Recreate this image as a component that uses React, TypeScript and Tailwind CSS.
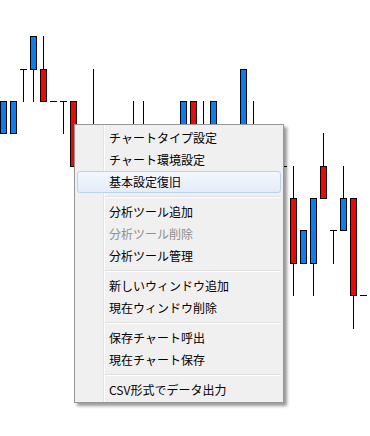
import React from 'react';

type Candle = {
  x: number;
  top?: number;
  bot?: number;
  fill?: string;
  hi?: number;
  lo?: number;
  tick?: number;
};

const BLUE = '#0080ff';
const RED = '#ff0000';

const candles: Candle[] = [
  { x: 0, top: 101, bot: 133, fill: BLUE },
  { x: 10, top: 101, bot: 133, fill: BLUE },
  { x: 20, tick: 69, hi: 69, lo: 101 },
  { x: 30, top: 36, bot: 69, fill: BLUE, hi: 36, lo: 101 },
  { x: 40, top: 69, bot: 101, fill: RED, hi: 36, lo: 101 },
  { x: 50, tick: 101 },
  { x: 60, tick: 101, hi: 101, lo: 133 },
  { x: 70, top: 101, bot: 166, fill: RED },
  { x: 90, hi: 69, lo: 230 },
  { x: 130, hi: 101, lo: 166 },
  { x: 140, hi: 101, lo: 198 },
  { x: 180, top: 101, bot: 166, fill: BLUE },
  { x: 190, top: 101, bot: 133, fill: RED },
  { x: 200, hi: 101, lo: 166 },
  { x: 210, top: 101, bot: 166, fill: BLUE },
  { x: 240, top: 69, bot: 166, fill: BLUE },
  { x: 250, hi: 101, lo: 198 },
  { x: 280, tick: 166, hi: 166, lo: 198 },
  { x: 290, top: 198, bot: 263, fill: RED, hi: 166, lo: 295 },
  { x: 300, top: 230, bot: 263, fill: BLUE },
  { x: 310, top: 198, bot: 263, fill: BLUE, lo: 295 },
  { x: 320, top: 166, bot: 198, fill: RED, hi: 133 },
  { x: 330, tick: 230, hi: 230, lo: 263 },
  { x: 340, top: 198, bot: 230, fill: BLUE, hi: 166 },
  { x: 350, top: 198, bot: 295, fill: RED, lo: 328 },
  { x: 360, tick: 295 },
];

const Chart = () => (
  <svg width="370" height="436" className="block" shapeRendering="crispEdges">
    {candles.map((c, i) => {
      const hi = c.hi ?? c.top;
      const lo = c.lo ?? c.bot;
      return (
        <g key={i}>
          {hi !== undefined && lo !== undefined && hi !== lo && (
            <line x1={c.x + 3.5} x2={c.x + 3.5} y1={hi} y2={lo + 1} stroke="#000" />
          )}
          {c.tick !== undefined && (
            <line x1={c.x} x2={c.x + 7} y1={c.tick + 0.5} y2={c.tick + 0.5} stroke="#000" />
          )}
          {c.top !== undefined && c.bot !== undefined && (
            <rect
              x={c.x + 0.5}
              y={c.top + 0.5}
              width={6}
              height={c.bot - c.top}
              fill={c.fill}
              stroke="#000"
            />
          )}
        </g>
      );
    })}
  </svg>
);

type Entry = { label: string; disabled?: boolean; active?: boolean } | 'sep';

const entries: Entry[] = [
  { label: 'チャートタイプ設定' },
  { label: 'チャート環境設定' },
  { label: '基本設定復旧', active: true },
  'sep',
  { label: '分析ツール追加' },
  { label: '分析ツール削除', disabled: true },
  { label: '分析ツール管理' },
  'sep',
  { label: '新しいウィンドウ追加' },
  { label: '現在ウィンドウ削除' },
  'sep',
  { label: '保存チャート呼出' },
  { label: '現在チャート保存' },
  'sep',
  { label: 'CSV形式でデータ出力' },
];

const ContextMenu = () => (
  <div className="absolute left-[74px] top-[124px] w-[210px] h-[279px] border border-[#979797] bg-[#f0f0f0] pt-[2px] pb-[1px] shadow-[3px_3px_3px_rgba(0,0,0,0.4)] font-['Noto_Sans_CJK_JP','Noto_Sans',sans-serif] text-[12px]">
    <div className="absolute left-[28px] top-0 bottom-0 w-px bg-[#e2e3e3]" />
    <div className="absolute left-[29px] top-0 bottom-0 w-px bg-white" />
    {entries.map((e, i) =>
      e === 'sep' ? (
        <div key={i} className="relative h-[8px] ml-[30px] mr-[2px] pt-[3px]">
          <div className="h-px bg-[#e0e0e0]" />
          <div className="h-px bg-white" />
        </div>
      ) : (
        <div
          key={i}
          className={
            e.active
              ? 'relative mx-[2px] h-[22px] leading-[20px] pl-[31px] rounded-[3px] border border-[#b8d2f3] bg-gradient-to-b from-[#f4f8fd] to-[#e4ecf8] text-black'
              : e.disabled
                ? 'relative mx-[2px] h-[22px] leading-[22px] pl-[32px] text-[#8f8f8f]'
                : 'relative mx-[2px] h-[22px] leading-[22px] pl-[32px] text-black'
          }
        >
          {e.label}
        </div>
      )
    )}
  </div>
);

export default function App() {
  return (
    <div className="relative w-[370px] h-[436px] bg-white overflow-hidden">
      <Chart />
      <ContextMenu />
    </div>
  );
}
